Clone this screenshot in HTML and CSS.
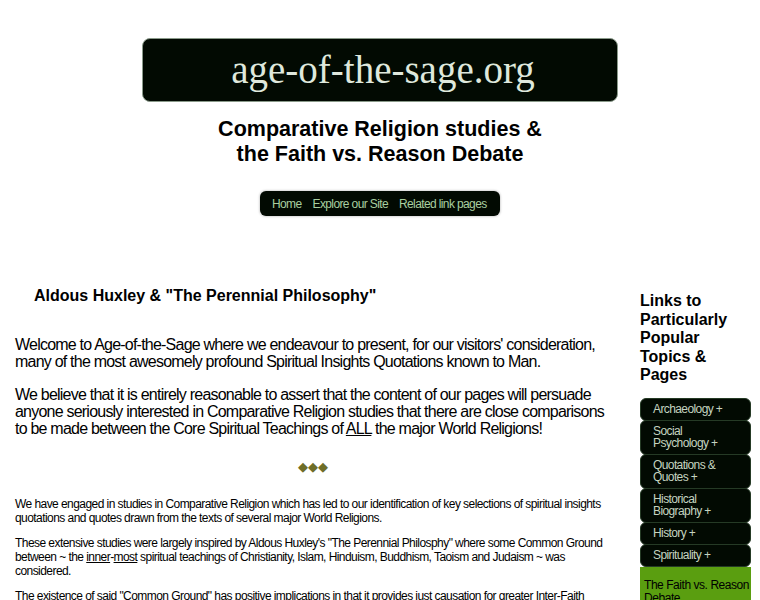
FILE: index.html
```html
<!DOCTYPE html>
<html>
<head>
<meta charset="utf-8">
<link rel="stylesheet" href="styles.css">
</head>
<body>
<div class="header">
  <div class="logo">age-of-the-sage.org</div>
  <h1 class="title">Comparative Religion studies &amp;<br>the Faith vs. Reason Debate</h1>
  <div class="nav">
    <a>Home</a><a>Explore our Site</a><a>Related link pages</a>
  </div>
</div>
<div class="layout">
  <div class="main">
    <h2 class="heading">Aldous Huxley &amp; "The Perennial Philosophy"</h2>
    <p class="lead">Welcome to Age-of-the-Sage where we endeavour to present, for our visitors' consideration, many of the most awesomely profound Spiritual Insights Quotations known to Man.</p>
    <p class="lead">We believe that it is entirely reasonable to assert that the content of our pages will persuade anyone seriously interested in Comparative Religion studies that there are close comparisons to be made between the Core Spiritual Teachings of <u>ALL</u> the major World Religions!</p>
    <div class="diamonds">&#9670;&#9670;&#9670;</div>
    <p class="small">We have engaged in studies in Comparative Religion which has led to our identification of key selections of spiritual insights quotations and quotes drawn from the texts of several major World Religions.</p>
    <p class="small">These extensive studies were largely inspired by Aldous Huxley's "The Perennial Philosphy" where some Common Ground between ~ the <u>inner</u>-<u>most</u> spiritual teachings of Christianity, Islam, Hinduism, Buddhism, Taoism and Judaism ~ was considered.</p>
    <p class="small">The existence of said "Common Ground" has positive implications in that it provides just causation for greater Inter-Faith understanding and harmony.</p>
  </div>
  <div class="side">
    <h3 class="side-title">Links to Particularly Popular Topics &amp; Pages</h3>
    <ul class="menu">
      <li>Archaeology +</li>
      <li>Social Psychology +</li>
      <li>Quotations &amp; Quotes +</li>
      <li>Historical Biography +</li>
      <li>History +</li>
      <li>Spirituality +</li>
    </ul>
    <div class="feature">The Faith vs. Reason Debate</div>
  </div>
</div>
</body>
</html>
```
FILE: styles.css
```css
html, body { margin: 0; padding: 0; background: #fff; }
body { font-family: "Liberation Sans", Arial, sans-serif; color: #000; }
.header { display: flex; flex-direction: column; align-items: center; padding-top: 38px; }
.logo {
  width: 476px; height: 64px; box-sizing: border-box;
  background: #020a02; border-radius: 8px; border: 1px solid #8a9a8a;
  color: #dfe8dc; font-family: "Liberation Serif", "DejaVu Serif", serif;
  font-size: 39px; text-align: center; line-height: 62px; padding-left: 6px;
}
.title { margin: 15px 0 0; font-size: 21.5px; line-height: 25px; text-align: center; font-weight: bold; }
.nav {
  margin-top: 24px; width: 240px; height: 25px; box-sizing: border-box;
  background: #020a02; border-radius: 6px; box-shadow: 0 0 2px 1px #d8d8d8;
  display: flex; align-items: center; padding-left: 12px; gap: 11px; white-space: nowrap;
}
.nav a { color: #a9cfa0; font-size: 12px; letter-spacing: -0.62px; }
.layout { display: flex; margin-top: 62px; }
.main { width: 610px; padding-left: 15px; box-sizing: border-box; }
.heading { margin: 8px 0 0 19px; font-size: 16px; line-height: 20px; font-weight: bold; }
.lead { margin: 30px 0 0; font-size: 16px; line-height: 17px; letter-spacing: -0.78px; }
.lead + .lead { margin-top: 16px; }
.diamonds { text-align: center; color: #6e6e28; font-size: 13px; letter-spacing: 0; margin-top: 22px; line-height: 16px; }
.small { margin: 11px 0 0; font-size: 12px; line-height: 14px; letter-spacing: -0.56px; }
.diamonds + .small { margin-top: 22px; }
.side { width: 111px; margin-left: 30px; }
.side-title { margin: 14px 0 0; font-size: 16px; line-height: 18.5px; font-weight: bold; }
.menu { list-style: none; margin: 14px 0 0; padding: 0; }
.menu li {
  background: #020a02; color: #c5d4c0; font-size: 12px; line-height: 12px; letter-spacing: -0.6px;
  padding: 4px 10px 5px 12px; border-radius: 6px; margin-top: -1px; border: 1px solid #253a25;
}
.feature { background: #5a9e10; color: #000; font-size: 12px; line-height: 13px; letter-spacing: -0.45px; padding: 12px 0 10px 4px; }
```
